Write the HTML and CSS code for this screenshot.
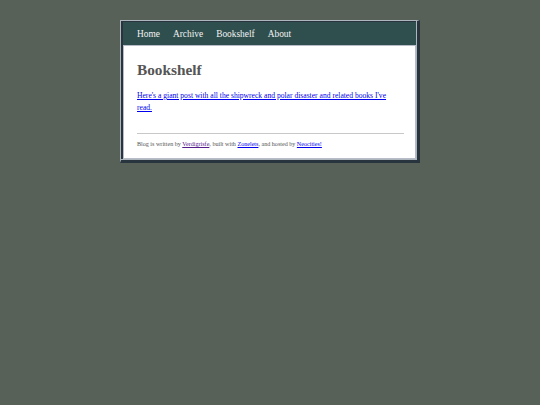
FILE: index.html
```html
<!DOCTYPE html>
<html>
<head>
<meta charset="utf-8">
<link rel="stylesheet" href="styles.css">
</head>
<body>
<div class="wrap">
  <nav class="nav">
    <a href="#">Home</a>
    <a href="#">Archive</a>
    <a href="#">Bookshelf</a>
    <a href="#">About</a>
  </nav>
  <main class="main">
    <h1 class="title">Bookshelf</h1>
    <p class="text"><a href="#">Here's a giant post with all the shipwreck and polar disaster and related books I've read.</a></p>
    <footer class="foot">
      <hr class="rule">
      <p class="credit">Blog is written by <a class="visited" href="#">Verdigrisfe</a>, built with <a href="#">Zonelets</a>, and hosted by <a href="#">Neocities!</a></p>
    </footer>
  </main>
</div>
</body>
</html>
```

FILE: styles.css
```css
html, body {
  margin: 0;
  padding: 0;
}
body {
  background: #586157;
  font-family: "Liberation Serif", "Times New Roman", serif;
}
.wrap {
  width: 293px;
  margin: 20px 0 0 120px;
  border-style: solid;
  border-width: 1px 3px 3px 1px;
  border-color: #aeb6bd #28343e #28343e #aeb6bd;
  padding: 1px 1px 1px 2px;
  background: #28343e;
  box-shadow: inset -1px -1px 0 #aeb6bd;
}
.nav {
  background: #2f4f4f;
  display: flex;
  gap: 13px;
  padding: 0 14px;
  height: 23px;
  align-items: center;
}
.nav a {
  color: #f2f2f2;
  text-decoration: none;
  font-size: 9.4px;
}
.main {
  background: #fff;
  border: 1px solid #b8bcc8;
  padding: 2px 11px 3px 13px;
}
.title {
  font-size: 15.3px;
  color: #555;
  margin: 13px 0 11px;
  line-height: 18px;
}
.text {
  font-size: 7.6px;
  line-height: 12px;
  margin: 0;
  max-width: 260px;
}
.text a {
  color: #0000ee;
}
.foot {
  margin-top: 19px;
}
.rule {
  border: 0;
  border-top: 1px solid #c8c8c8;
  margin: 0;
}
.credit {
  font-size: 6.1px;
  color: #555;
  margin: 7px 0 8px;
}
.credit a {
  color: #0000ee;
}
.credit a.visited {
  color: #551a8b;
}
```
